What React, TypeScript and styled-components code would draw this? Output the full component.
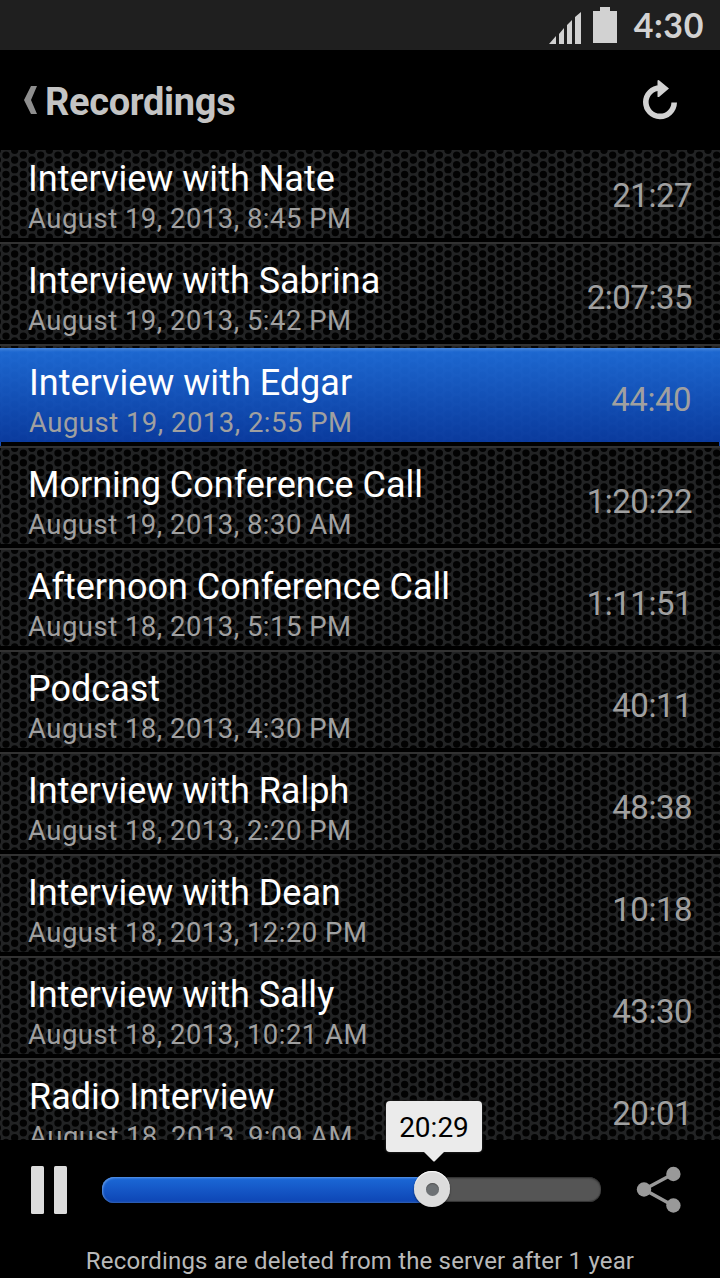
import React from "react";
import styled, { createGlobalStyle, css } from "styled-components";

const Global = createGlobalStyle`
  * { box-sizing: border-box; }
  body { margin: 0; background: #000; font-family: Roboto, sans-serif; }
`;

// Perforated metal tile: six staggered columns of holes, three holes per column.
const holes = Array.from({ length: 7 }, (_, col) =>
  Array.from({ length: 5 }, (_, row) => {
    const cx = (6 + (col - 1) * 8.6667).toFixed(2);
    const cy = ((col % 2 ? 5.1 : 0.3) + (row - 1) * 9.6667).toFixed(2);
    return `<circle cx='${cx}' cy='${cy}' r='3.7'/>`;
  }).join("")
).join("");
const mesh = "url(\"data:image/svg+xml," + encodeURIComponent(
  `<svg xmlns='http://www.w3.org/2000/svg' width='52' height='29' viewBox='0 0 52 29'><rect width='52' height='29' fill='#222324'/><g fill='#020202'>${holes}</g></svg>`
) + "\")";

const Screen = styled.main`
  width: 720px;
  height: 1278px;
  display: flex;
  flex-direction: column;
  overflow: hidden;
  background: #000;
`;
const StatusBar = styled.header`
  height: 50px;
  flex: none;
  display: flex;
  align-items: flex-start;
  justify-content: flex-end;
  padding-right: 16px;
  background: #1f1f1f;
  color: #d2d2d2;
`;
const StatusIcons = styled.svg`
  width: 74px;
  height: 50px;
  margin-right: 14px;
`;
const Clock = styled.time`
  font: 700 34px/49px Lato, sans-serif;
  letter-spacing: 0.6px;
`;
const TitleBar = styled.nav`
  height: 100px;
  flex: none;
  display: flex;
  align-items: center;
  padding: 0 42px 0 24px;
`;
const BackIcon = styled.svg`
  width: 14px;
  height: 28px;
  margin-right: 7px;
`;
const Heading = styled.h1`
  flex: 1;
  margin: 4px 0 0;
  font-size: 38px;
  line-height: 50px;
  letter-spacing: -0.33px;
  font-weight: 700;
  color: #c4c4c4;
`;
const RefreshIcon = styled.svg`
  width: 36px;
  height: 42px;
`;
const List = styled.ul`
  height: 990px;
  flex: none;
  margin: 0;
  padding: 0;
  list-style: none;
  overflow: hidden;
`;
const Row = styled.li<{ $active?: boolean; $first?: boolean; $inset?: boolean }>`
  height: 102px;
  display: flex;
  justify-content: space-between;
  padding: 15px 28px 0 ${(p) => (p.$inset ? 29 : 28)}px;
  border-top: 2px solid #323232;
  border-bottom: 4px solid #000;
  background: ${mesh} 0 0 repeat padding-box padding-box #000;
  ${(p) => p.$first && css`
    height: 92px;
    padding-top: 7px;
    border-top: 0;
  `}
  ${(p) => p.$active && css`
    padding-right: 29px;
    border-bottom-color: transparent;
    background:
      linear-gradient(#174cb0, #174cb0) 0 100% / 1px 4px no-repeat border-box,
      linear-gradient(#174cb0, #174cb0) 100% 100% / 1px 4px no-repeat border-box,
      linear-gradient(transparent 2px, #4688e2f5 2px, #1e6ddcf0 6px, #0a3da6f0) padding-box,
      ${mesh} 0 0 repeat padding-box padding-box #000;
  `}
`;
const Details = styled.div`
  display: flex;
  flex-direction: column;
`;
const Name = styled.span`
  font-size: 36px;
  line-height: 44px;
  letter-spacing: 0;
  color: #fff;
`;
const Stamp = styled.span`
  font-size: 27.5px;
  line-height: 36px;
  letter-spacing: 0.48px;
  color: #a0a0a0;
`;
const Duration = styled.span`
  padding-top: 17px;
  font-size: 33px;
  line-height: 44px;
  letter-spacing: -0.5px;
  color: #a0a0a0;
`;
const Player = styled.section`
  height: 100px;
  flex: none;
  display: flex;
  align-items: center;
  padding: 0 39px 0 31px;
`;
const PauseButton = styled.div`
  width: 36px;
  height: 48px;
  display: flex;
  justify-content: space-between;
  margin-right: 35px;
`;
const PauseBar = styled.span`
  width: 12.6px;
  border-radius: 1.5px;
  background: #dcdcdc;
`;
const Track = styled.div`
  position: relative;
  width: 499px;
  height: 25px;
  margin: 0 35px 1px 0;
  border-radius: 12px;
  background: #555;
  box-shadow: inset 0 1px 2px #292929, inset 0 -1px 1px #333;
`;
const Fill = styled.div`
  width: 330px;
  height: 26px;
  border-radius: 12px 0 0 12px;
  background: linear-gradient(#1c69d7, #0d44b4);
  box-shadow: inset 1px 1px 2px #5b95e5, inset 0 -1px 2px #315fae;
`;
const Thumb = styled.div`
  position: absolute;
  left: 312px;
  top: -6px;
  width: 36px;
  height: 36px;
  display: grid;
  place-items: center;
  border-radius: 50%;
  background: #dcdcdc;
  box-shadow: inset 0 1px 1px #fff, 0 1px 2px #0008;
`;
const ThumbHole = styled.i`
  width: 13px;
  height: 13px;
  border-radius: 50%;
  background: #6e7275;
  box-shadow: inset 0 1px 1px #555;
`;
const Bubble = styled.div`
  position: absolute;
  left: 284px;
  top: -76px;
  width: 96px;
  height: 51px;
  border-radius: 4px;
  background: #ebebeb;
  box-shadow: 0 0 2px 1px #1a1a1a;
  color: #000;
  font-size: 28px;
  line-height: 54px;
  text-align: center;
`;
const BubbleTip = styled.svg`
  position: absolute;
  left: 38px;
  top: 51px;
  width: 20px;
  height: 10px;
`;
const ShareIcon = styled.svg`
  width: 45px;
  height: 48px;
`;
const Notice = styled.footer`
  text-align: center;
  padding-top: 5px;
  font-size: 24px;
  line-height: 32px;
  letter-spacing: 0.17px;
  color: #b9b9b9;
`;

const recordings = [
  ["Interview with Nate", "August 19, 2013, 8:45 PM", "21:27"],
  ["Interview with Sabrina", "August 19, 2013, 5:42 PM", "2:07:35"],
  ["Interview with Edgar", "August 19, 2013, 2:55 PM", "44:40"],
  ["Morning Conference Call", "August 19, 2013, 8:30 AM", "1:20:22"],
  ["Afternoon Conference Call", "August 18, 2013, 5:15 PM", "1:11:51"],
  ["Podcast", "August 18, 2013, 4:30 PM", "40:11"],
  ["Interview with Ralph", "August 18, 2013, 2:20 PM", "48:38"],
  ["Interview with Dean", "August 18, 2013, 12:20 PM", "10:18"],
  ["Interview with Sally", "August 18, 2013, 10:21 AM", "43:30"],
  ["Radio Interview", "August 18, 2013, 9:09 AM", "20:01"],
];

export default function App() {
  return (
    <Screen>
      <Global />
      <StatusBar>
        <StatusIcons viewBox="546 0 74 50" fill="#d2d2d2">
          <path d="M549 44l7-8v8zM559 34l5-6v16h-5zM567 25l5-5v24h-5zM575 17l6-5v32h-6zM593 11h7V7h10v4h7v32h-24z" />
        </StatusIcons>
        <Clock>4:30</Clock>
      </StatusBar>
      <TitleBar>
        <BackIcon viewBox="0 0 14 28"><path d="M7 0h6L7 14l6 14H7L0 14z" fill="#8e8e8e" /></BackIcon>
        <Heading>Recordings</Heading>
        <RefreshIcon viewBox="642 79 36 42">
          <path d="M660 88a14.2 14.2 0 1 0 14.2 14.5" fill="none" stroke="#d2d2d2" strokeWidth="5.6" />
          <path d="M657.5 80.5q.8-1 1.8 0L669 88.5l-9.7 8.2q-1 .8-1.8 0z" fill="#d2d2d2" />
        </RefreshIcon>
      </TitleBar>
      <List>
        {recordings.map(([name, stamp, duration], i) => (
          <Row key={name} $first={i === 0} $active={i === 2} $inset={i === 2 || i === 9}>
            <Details>
              <Name>{name}</Name>
              <Stamp>{stamp}</Stamp>
            </Details>
            <Duration>{duration}</Duration>
          </Row>
        ))}
      </List>
      <Player>
        <PauseButton><PauseBar /><PauseBar /></PauseButton>
        <Track>
          <Fill />
          <Thumb><ThumbHole /></Thumb>
          <Bubble>
            20:29
            <BubbleTip viewBox="0 0 20 10"><path d="M0 0h20l-9 9q-1 1-2 0z" fill="#ebebeb" /></BubbleTip>
          </Bubble>
        </Track>
        <ShareIcon viewBox="636 1166 45 48" fill="#999" stroke="#999">
          <path d="M673 1174l-29 15.5 29 16" fill="none" strokeWidth="3.4" />
          <g stroke="none"><circle cx="673.4" cy="1174" r="7.2" /><circle cx="644" cy="1189.5" r="7.2" /><circle cx="673.4" cy="1205.5" r="7.2" /></g>
        </ShareIcon>
      </Player>
      <Notice>Recordings are deleted from the server after 1 year</Notice>
    </Screen>
  );
}
